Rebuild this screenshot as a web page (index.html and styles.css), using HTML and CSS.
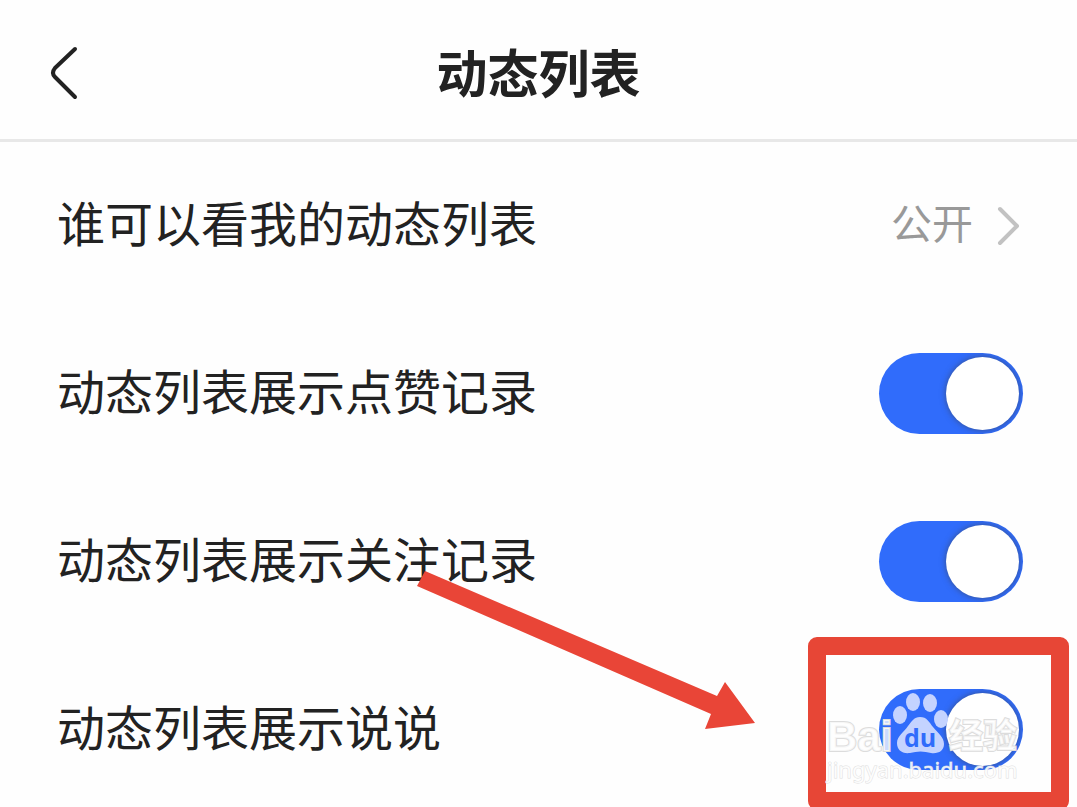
FILE: index.html
```html
<!DOCTYPE html>
<html lang="zh-CN">
<head>
  <meta charset="UTF-8" />
  <title>动态列表</title>
  <meta name="viewport" content="width=device-width, initial-scale=1" />
  <link rel="stylesheet" href="styles.css">
</head>
<body>
  <header class="top-bar">
    <button class="back" type="button" aria-label="返回">
      <svg width="32" height="56" viewBox="0 0 32 56" fill="none">
        <path d="M27 4 L7 23 Q3 28 7 32 L27 52" stroke="#222" stroke-width="4" stroke-linecap="round" stroke-linejoin="round" />
      </svg>
    </button>
    <h1>动态列表</h1>
  </header>

  <main class="settings">
    <a class="row" href="#">
      <span class="label">谁可以看我的动态列表</span>
      <span class="value">
        <span class="label">公开</span>
        <svg width="26" height="40" viewBox="0 0 26 40" fill="none">
          <path d="M3 3 L20 20 L3 37" stroke="#c2c2c2" stroke-width="4" stroke-linecap="round" stroke-linejoin="round" />
        </svg>
      </span>
    </a>
    <div class="row">
      <label class="label" for="likes">动态列表展示点赞记录</label>
      <input class="switch" type="checkbox" id="likes" checked />
    </div>
    <div class="row">
      <label class="label" for="follows">动态列表展示关注记录</label>
      <input class="switch" type="checkbox" id="follows" checked />
    </div>
    <div class="row">
      <label class="label" for="posts">动态列表展示说说</label>
      <input class="switch" type="checkbox" id="posts" checked />

      <!-- arrow and frame pointing at the switch -->
      <svg class="marker" width="680" height="260" viewBox="0 0 680 260">
        <path d="M28 11 L320 136 L328 122 L358 163 L308 169 L314 154 L20 26 Z" fill="#e94537" />
        <rect x="420" y="86" width="243" height="155" fill="none" stroke="#e74636" stroke-width="18" stroke-linejoin="round" />
      </svg>

      <svg class="watermark" width="200" height="100" viewBox="0 0 200 100">
        <g class="wm-large">
          <text x="2" y="66" class="wm-latin">Bai</text>
          <text x="124" y="63" class="wm-han">经验</text>
        </g>
        <g fill="#c4d3ff">
          <ellipse cx="75" cy="30" rx="7" ry="9" />
          <ellipse cx="88" cy="17" rx="7" ry="9" />
          <ellipse cx="105" cy="18" rx="7" ry="9" />
          <ellipse cx="116" cy="34" rx="7" ry="9" />
          <path d="M95 32 C102 32 104 37 108 42 C113 48 119 52 119 59 C119 66 113 69 106 68 C99 66 92 66 85 68 C77 69 72 65 72 58 C72 51 79 47 83 41 C87 36 89 32 95 32 Z" />
        </g>
        <text x="79" y="62" class="wm-du">du</text>
        <text x="2" y="93" class="wm-url">jingyan.baidu.com</text>
      </svg>
    </div>
  </main>
</body>
</html>
```
FILE: styles.css
```css
* {
  box-sizing: border-box;
}
body {
  margin: 0;
  min-height: 100vh;
  overflow: hidden;
  background: #fefefe;
  color: #222;
  font-family: "Noto Sans CJK SC", sans-serif;
}
.top-bar {
  position: relative;
  display: flex;
  align-items: center;
  justify-content: center;
  height: 142px;
  padding-top: 2px;
  border-bottom: 3px solid #e8e8e8;
}
.back {
  position: absolute;
  left: 48px;
  top: 45px;
  padding: 0;
  border: none;
  background: none;
  cursor: pointer;
}
.back svg {
  display: block;
}
h1 {
  margin: 0;
  font-size: 51px;
  line-height: 72px;
  font-weight: 700;
}
.settings {
  display: flex;
  flex-direction: column;
  gap: 87px;
  padding: 43px 54px 0 57px;
}
.row {
  position: relative;
  display: flex;
  align-items: center;
  justify-content: space-between;
  height: 81px;
  color: inherit;
  font-size: 48px;
  line-height: 71px;
  text-decoration: none;
}
.label {
  padding-bottom: 8px;
}
.value {
  display: flex;
  align-items: center;
  gap: 24px;
  color: #999;
  font-size: 41px;
}
.switch {
  appearance: none;
  display: flex;
  align-items: center;
  justify-content: flex-end;
  width: 144px;
  height: 81px;
  margin: 0;
  padding: 0 4px;
  border-radius: 41px;
  overflow: hidden;
  background: #306cfb;
  cursor: pointer;
}
.switch::before {
  content: "";
  width: 73px;
  height: 73px;
  border-radius: 50%;
  background: #fff;
  box-shadow: 0 0 6px rgba(60, 60, 60, 0.6);
}
.switch:not(:checked) {
  justify-content: flex-start;
  background: #ddd;
}
.marker,
.watermark {
  position: absolute;
  pointer-events: none;
}
.marker {
  right: -54px;
  top: -129px;
}
.watermark {
  right: -2px;
  top: -4px;
}
.wm-large text {
  fill: rgba(255, 255, 255, 0.75);
  stroke: #dcdcdc;
  stroke-width: 2px;
  paint-order: stroke;
  font-weight: 700;
}
.wm-latin {
  font-family: "Liberation Sans", sans-serif;
  font-size: 42px;
}
.wm-han {
  font-size: 34px;
}
.wm-du {
  fill: #306cfb;
  font-family: "Open Sans", sans-serif;
  font-size: 25px;
  font-weight: 700;
}
.wm-url {
  fill: rgba(255, 255, 255, 0.85);
  stroke: rgba(215, 215, 215, 0.8);
  stroke-width: 1px;
  paint-order: stroke;
  font-family: "Noto Sans", sans-serif;
  font-size: 22px;
}
```
